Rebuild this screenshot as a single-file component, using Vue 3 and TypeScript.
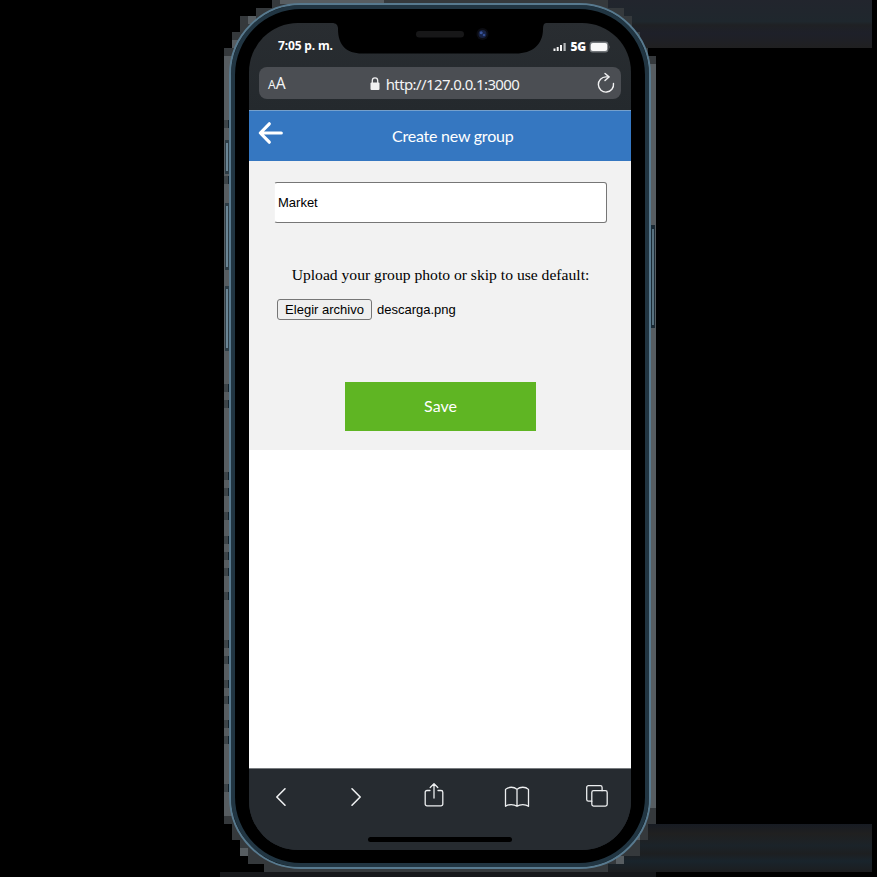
<script setup lang="ts">
import { ref } from 'vue'

const clock = '7:05 p. m.'
const address = 'http://127.0.0.1:3000'
const groupName = ref('Market')
const fileName = ref('descarga.png')
const leftMarks = [120, 176, 384, 400, 472, 488, 512, 536, 552, 568, 592, 640, 656, 680, 696, 720, 736, 784]
const leftKeys = [
  { y: 140, h: 34 },
  { y: 203, h: 67 },
  { y: 286, h: 65 },
]
</script>

<template>
  <main class="stage">
    <svg class="backdrop" width="877" height="877" viewBox="0 0 877 877" shape-rendering="crispEdges" aria-hidden="true">
      <defs>
        <linearGradient id="bandTop" x1="0" y1="0" x2="0" y2="1">
          <stop offset="0" stop-color="#22252d" />
          <stop offset=".45" stop-color="#1f272d" />
          <stop offset=".52" stop-color="#1f2124" />
          <stop offset=".7" stop-color="#1e2029" />
          <stop offset="1" stop-color="#202021" />
        </linearGradient>
        <linearGradient id="bandBottom" x1="0" y1="0" x2="0" y2="1">
          <stop offset="0" stop-color="#171b23" />
          <stop offset=".2" stop-color="#202020" />
          <stop offset=".45" stop-color="#1b2329" />
          <stop offset=".62" stop-color="#1d1f21" />
          <stop offset=".77" stop-color="#19242c" />
          <stop offset="1" stop-color="#1c1d1f" />
        </linearGradient>
      </defs>
      <rect x="600" y="0" width="272" height="48" fill="url(#bandTop)" />
      <rect x="600" y="824" width="272" height="48" fill="url(#bandBottom)" />
      <rect x="220" y="872" width="436" height="5" fill="#17181b" />
      <path fill="#35393c" d="M272 0H608V8H624V16H632V32H640V48H648V56H656V824H648V840H640V856H624V864H608V872H264V864H248V856H240V840H232V824H224V48H232V32H240V16H256V8H272Z" />
      <path fill="#575d61" d="M224 56h8v760h-8zM648 64h8v744h-8zM232 40h8v8h-8zM248 16h8v8h-8zM280 0h104v4H280zM632 40h8v8h-8zM240 848h8v8h-8zM632 832h8v8h-8zM616 856h8v8h-8z" />
      <g v-for="y in leftMarks" :key="y">
        <rect x="224" :y="y" width="4" height="8" fill="#3d4448" />
        <rect x="228" :y="y" width="1" height="8" fill="#14212a" />
      </g>
      <g v-for="k in leftKeys" :key="k.y">
        <rect x="225" :y="k.y" width="4" :height="k.h" fill="#2d3c45" />
        <rect x="226" :y="k.y + 3" width="2" :height="k.h - 6" fill="#6b8696" />
      </g>
      <rect x="651" y="225" width="4" height="103" fill="#1a2933" />
      <rect x="652" y="229" width="2" height="96" fill="#58717f" />
    </svg>

    <section class="phone">
      <div class="screen">
        <div class="notch">
          <svg width="214" height="31" viewBox="0 0 214 31" aria-hidden="true">
            <path d="M0 0C4 0 6 2 6 6C6 22 14 30.500 30 30.500H184C200 30.500 211 22 211 6C211 2 212 0 214 0Z" fill="#000" />
            <rect x="84" y="8" width="48" height="6.500" rx="3.250" fill="#171718" />
            <circle cx="150.500" cy="11" r="6" fill="#0b0c12" />
            <circle cx="150.500" cy="11" r="4" fill="#172243" />
            <circle cx="149.200" cy="9.800" r="1.500" fill="#38549c" />
            <circle cx="152" cy="12" r="1.300" fill="#304b91" />
          </svg>
        </div>

        <div class="status">
          <span class="clock">{{ clock }}</span>
          <span class="signal">
            <svg width="14" height="10" viewBox="0 0 14 10" aria-hidden="true">
              <path d="M.5 6.500h2V9h-2zM3.700 5h2v4h-2zM7 3h2v6H7z" fill="#f5f5f5" />
              <path d="M10.500 1h2.200v8h-2.200z" fill="#b3b6b8" />
            </svg>
            <b>5G</b>
            <svg width="21" height="12" viewBox="0 0 21 12" aria-hidden="true">
              <rect x=".6" y=".6" width="18.800" height="10.800" rx="3" fill="#73777b" />
              <rect x="1.800" y="1.900" width="16.400" height="8.200" rx="2" fill="#f8f8f8" />
              <path d="M20 4q1 2 0 4z" fill="#8b8e91" />
            </svg>
          </span>
        </div>

        <div class="address">
          <span class="aa"><small>A</small>A</span>
          <span class="url">
            <svg width="10" height="14" viewBox="0 0 10 14" aria-hidden="true">
              <rect x=".5" y="5.500" width="9" height="7.500" rx="1" fill="#f0f0f1" />
              <path d="M2.300 6V3.600a2.700 2.700 0 0 1 5.400 0V6" fill="none" stroke="#f0f0f1" stroke-width="1.300" />
            </svg>
            {{ address }}
          </span>
          <svg width="18" height="22" viewBox="0 0 18 22" fill="none" stroke="#f1f1f2" stroke-width="1.400" stroke-linecap="round" stroke-linejoin="round" aria-hidden="true">
            <path d="M11.800 4.900H9A7.600 7.600 0 1 0 16.500 11.500" />
            <path d="M8 1.500L12 4.900L8 8.600" />
          </svg>
        </div>

        <header class="title">
          <svg width="26" height="24" viewBox="0 0 26 24" fill="none" stroke="#fff" stroke-width="3.200" stroke-linecap="round" stroke-linejoin="round" aria-label="Back">
            <path d="M11.300 2.800L2.300 12L11.300 21.200M2.500 12H23.300" />
          </svg>
          <h1>Create new group</h1>
        </header>

        <form class="form" @submit.prevent>
          <input v-model="groupName" class="name" type="text" />
          <p>Upload your group photo or skip to use default:</p>
          <div class="file">
            <button type="button" class="choose">Elegir archivo</button>
            <span>{{ fileName }}</span>
          </div>
          <button type="submit" class="save">Save</button>
        </form>

        <div class="blank"></div>

        <nav class="toolbar">
          <div class="tools">
            <svg width="12" height="20" viewBox="0 0 12 20"><path d="M10 1.800L1.800 10L10 18.200" stroke-width="1.600" /></svg>
            <svg class="next" width="12" height="20" viewBox="0 0 12 20"><path d="M2 1.800L10.200 10L2 18.200" stroke-width="1.600" /></svg>
            <svg class="share" width="20" height="26" viewBox="0 0 20 26"><path d="M6 8.500H3a1.800 1.800 0 0 0-1.800 1.800V22a1.800 1.800 0 0 0 1.800 1.800H17a1.800 1.800 0 0 0 1.800-1.800V10.300A1.800 1.800 0 0 0 17 8.500H14M10 16V1.800M6.200 5.500L10 1.700L13.800 5.500" /></svg>
            <svg class="book" width="26" height="22" viewBox="0 0 26 22"><path d="M13 3.400C10 .5 4.500.5 1.500 3.400V20.300C4.500 18 10 18 13 20.300C16 18 21.500 18 24.500 20.300V3.400C21.500.5 16 .5 13 3.400V20.300" /></svg>
            <svg class="tabs" width="24" height="24" viewBox="0 0 24 24"><rect x="6.800" y="6.700" width="15.400" height="15.400" rx="1.800" /><path d="M6.800 17.200H3.500A1.800 1.800 0 0 1 1.700 15.400V3.500A1.800 1.800 0 0 1 3.500 1.700H15.300A1.800 1.800 0 0 1 17.100 3.500V6.700" /></svg>
          </div>
          <div class="home"></div>
        </nav>
      </div>
    </section>
  </main>
</template>

<style>
body {
  background: #000;
}
</style>

<style scoped>
.stage {
  position: relative;
  width: 877px;
  height: 877px;
  box-sizing: border-box;
  padding: 3px 226px 8px 229px;
  overflow: hidden;
  background: #000;
}
.backdrop {
  position: absolute;
  inset: 0;
}
.phone {
  position: relative;
  width: 422px;
  height: 866px;
  box-sizing: border-box;
  padding: 18px 18px 17px;
  border: 2px solid #587a8f;
  border-radius: 72px;
  background: #000;
  box-shadow: inset 0 0 0 4px #213542;
}
.screen {
  position: relative;
  display: flex;
  flex-direction: column;
  width: 382px;
  height: 827px;
  overflow: hidden;
  border-radius: 49px;
  background: linear-gradient(#292d31, #24292d 87px);
}
.notch {
  position: absolute;
  top: 0;
  left: 82.5px;
  height: 31px;
}
.notch svg,
.title svg,
.tools svg {
  display: block;
}
.status {
  display: flex;
  flex: 0 0 44px;
  box-sizing: border-box;
  justify-content: space-between;
  padding: 14px 21px 0 29px;
  color: #fff;
  font: 700 12px/18px "Noto Sans", "Open Sans", sans-serif;
}
.clock {
  letter-spacing: -0.15px;
}
.signal {
  display: flex;
  height: 20px;
  align-items: center;
  gap: 3px;
}
.signal b {
  font-size: 12px;
  letter-spacing: -0.2px;
}
.address {
  display: flex;
  flex: 0 0 32px;
  align-items: center;
  justify-content: space-between;
  box-sizing: border-box;
  height: 32px;
  margin: 0 10px 11px;
  padding: 0 6px 0 9px;
  border-radius: 8px;
  background: #4b4e53;
  color: #f3f3f4;
  font: 15px/22px "Noto Sans", "Open Sans", sans-serif;
}
.aa {
  width: 24px;
  padding-top: 2px;
  font-size: 15.5px;
}
.aa small {
  font-size: 12px;
}
.url {
  display: flex;
  align-items: center;
  gap: 6px;
  padding-top: 1px;
  letter-spacing: -0.61px;
  white-space: nowrap;
}
.title {
  display: flex;
  flex: 0 0 51px;
  box-sizing: border-box;
  padding: 10px 0 0 9px;
  border-top: 1px solid #75a0cc;
  background: #3577c1;
  color: #fff;
}
h1 {
  margin: 4px 0 0 108px;
  font: 400 16px/22px Lato, "Open Sans", sans-serif;
  letter-spacing: -0.23px;
  white-space: nowrap;
}
.form {
  display: flex;
  flex: 0 0 289px;
  flex-direction: column;
  align-items: center;
  box-sizing: border-box;
  padding: 21px 24px 0 25px;
  background: #f2f2f2;
}
.name {
  width: 333px;
  height: 41px;
  box-sizing: border-box;
  padding: 0 3px;
  border: 1px solid #767676;
  border-left-color: #f4f4f4;
  border-radius: 3px;
  outline: 0;
  background: #fff;
  color: #000;
  font: 13px "Liberation Sans", Arial, sans-serif;
}
p {
  margin: 43px 0 15px;
  color: #000;
  font: 15.64px/18px "Liberation Serif", "Times New Roman", serif;
  white-space: nowrap;
}
.file {
  display: flex;
  align-self: stretch;
  align-items: center;
  gap: 5px;
  margin-left: 3px;
  color: #000;
  font: 13px/21px "Liberation Sans", Arial, sans-serif;
}
.choose {
  width: 95px;
  height: 21px;
  padding: 0;
  border: 1px solid #767676;
  border-radius: 3px;
  background: #efefef;
  color: #000;
  font: inherit;
  line-height: 18px;
}
.save {
  width: 191px;
  height: 49px;
  margin-top: 61.5px;
  padding: 0;
  border: 0;
  background: #5fb523;
  color: #fff;
  font: 16px/48px Lato, "Open Sans", sans-serif;
}
.blank {
  flex: 1;
  background: #fff;
}
.toolbar {
  display: flex;
  flex: 0 0 82px;
  flex-direction: column;
  align-items: center;
  box-sizing: border-box;
  border-top: 1px solid #777b7e;
  background: #262b30;
}
.tools {
  display: flex;
  align-items: center;
  align-self: stretch;
  height: 28px;
  margin-top: 13px;
  padding-left: 26px;
}
.tools svg {
  fill: none;
  stroke: #edeff0;
  stroke-width: 1.3;
  stroke-linecap: round;
  stroke-linejoin: round;
}
.tools svg:first-child,
.tools .next {
  margin-top: 2px;
}
.tools .next {
  margin-left: 63px;
}
.tools .share {
  margin-top: -3px;
  margin-left: 62px;
}
.tools .book {
  margin-top: 1px;
  margin-left: 60px;
}
.tools .tabs {
  margin-left: 55px;
}
.home {
  width: 144px;
  height: 5px;
  margin-top: 27px;
  border-radius: 3px;
  background: #000;
}
</style>
